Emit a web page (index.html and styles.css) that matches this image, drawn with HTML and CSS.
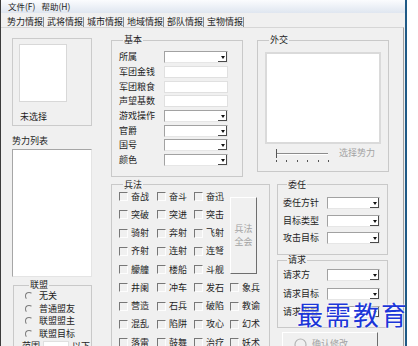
FILE: index.html
```html
<!DOCTYPE html>
<html lang="zh-CN">
<head>
    <meta charset="UTF-8">
    <title>势力情报</title>
    <link rel="stylesheet" href="styles.css">
</head>
<body>
    <div class="window">
        <div class="menubar">
            <span class="menu">文件(F)</span>
            <span class="menu">帮助(H)</span>
        </div>
        <div class="tabs">
            <span class="tab">势力情报</span>
            <span class="tab">武将情报</span>
            <span class="tab">城市情报</span>
            <span class="tab">地域情报</span>
            <span class="tab">部队情报</span>
            <span class="tab">宝物情报</span>
        </div>

        <div class="panel">
            <div class="side">
                <div class="portrait">
                    <div class="photo"></div>
                    <div class="name">未选择</div>
                </div>
                <div class="list-title">势力列表</div>
                <div class="list"></div>
                <fieldset class="group alliance">
                    <legend>联盟</legend>
                    <div class="radios">
                        <label class="radio"><span class="dot"></span>无关</label>
                        <label class="radio"><span class="dot"></span>普通盟友</label>
                        <label class="radio"><span class="dot"></span>联盟盟主</label>
                        <label class="radio"><span class="dot"></span>联盟目标</label>
                        <div class="range">范围<span class="field small"></span>以下</div>
                    </div>
                </fieldset>
            </div>

            <div class="main">
                <div class="row">
                    <fieldset class="group basic">
                        <legend>基本</legend>
                        <div class="form">
                            <span>所属</span><span class="combo"></span>
                            <span>军团金钱</span><span class="field"></span>
                            <span>军团粮食</span><span class="field"></span>
                            <span>声望基数</span><span class="field"></span>
                            <span>游戏操作</span><span class="combo"></span>
                            <span>官爵</span><span class="combo"></span>
                            <span>国号</span><span class="combo"></span>
                            <span>颜色</span><span class="combo"></span>
                        </div>
                    </fieldset>
                    <fieldset class="group diplomacy">
                        <legend>外交</legend>
                        <div class="relations"></div>
                        <div class="slider-row">
                            <svg class="slider" width="58" height="16" viewBox="0 0 58 16">
                                <line x1="3" y1="5.5" x2="55" y2="5.5" stroke="#8c8c8c"/>
                                <line x1="3" y1="6.5" x2="55" y2="6.5" stroke="#ffffff"/>
                                <line x1="3.5" y1="1" x2="3.5" y2="10" stroke="#555"/>
                                <rect x="3" y="12" width="1" height="2" fill="#555"/>
                                <rect x="13" y="12" width="1" height="2" fill="#555"/>
                                <rect x="24" y="12" width="1" height="2" fill="#555"/>
                                <rect x="34" y="12" width="1" height="2" fill="#555"/>
                                <rect x="45" y="12" width="1" height="2" fill="#555"/>
                                <rect x="55" y="12" width="1" height="2" fill="#555"/>
                            </svg>
                            <span class="muted">选择势力</span>
                        </div>
                    </fieldset>
                </div>

                <div class="row lower">
                    <fieldset class="group tactics">
                        <legend>兵法</legend>
                        <div class="checks">
                            <button class="all-btn">兵法<br>全会</button>
                            <label class="check"><span class="box"></span>奋战</label>
                            <label class="check"><span class="box"></span>奋斗</label>
                            <label class="check"><span class="box"></span>奋迅</label>
                            <label class="check"><span class="box"></span>突破</label>
                            <label class="check"><span class="box"></span>突进</label>
                            <label class="check"><span class="box"></span>突击</label>
                            <label class="check"><span class="box"></span>骑射</label>
                            <label class="check"><span class="box"></span>奔射</label>
                            <label class="check"><span class="box"></span>飞射</label>
                            <label class="check"><span class="box"></span>齐射</label>
                            <label class="check"><span class="box"></span>连射</label>
                            <label class="check"><span class="box"></span>连弩</label>
                            <label class="check"><span class="box"></span>艨艟</label>
                            <label class="check"><span class="box"></span>楼船</label>
                            <label class="check"><span class="box"></span>斗舰</label>
                            <label class="check"><span class="box"></span>井阑</label>
                            <label class="check"><span class="box"></span>冲车</label>
                            <label class="check"><span class="box"></span>发石</label>
                            <label class="check"><span class="box"></span>象兵</label>
                            <label class="check"><span class="box"></span>营造</label>
                            <label class="check"><span class="box"></span>石兵</label>
                            <label class="check"><span class="box"></span>破陷</label>
                            <label class="check"><span class="box"></span>教谕</label>
                            <label class="check"><span class="box"></span>混乱</label>
                            <label class="check"><span class="box"></span>陷阱</label>
                            <label class="check"><span class="box"></span>攻心</label>
                            <label class="check"><span class="box"></span>幻术</label>
                            <label class="check"><span class="box"></span>落雷</label>
                            <label class="check"><span class="box"></span>鼓舞</label>
                            <label class="check"><span class="box"></span>治疗</label>
                            <label class="check"><span class="box"></span>妖术</label>
                        </div>
                    </fieldset>

                    <div class="stack">
                        <fieldset class="group delegate">
                            <legend>委任</legend>
                            <div class="form small-form">
                                <span>委任方针</span><span class="combo"></span>
                                <span>目标类型</span><span class="combo"></span>
                                <span>攻击目标</span><span class="combo"></span>
                            </div>
                        </fieldset>
                        <fieldset class="group request">
                            <legend>请求</legend>
                            <div class="form small-form">
                                <span>请求方</span><span class="combo"></span>
                                <span>请求目标</span><span class="combo"></span>
                                <span>请求内容</span><span class="combo"></span>
                            </div>
                        </fieldset>
                        <button class="confirm">
                            <svg width="13" height="13" viewBox="0 0 13 13">
                                <circle cx="6.5" cy="6.5" r="5.5" fill="none" stroke="#b4b4b4" stroke-width="1.2"/>
                            </svg>
                            确认修改
                        </button>
                    </div>
                </div>
            </div>
        </div>

        <div class="watermark">最需教育</div>
    </div>
</body>
</html>
```

FILE: styles.css
```css
body {
    margin: 0;
    background: #fff;
    font-family: "Noto Sans CJK SC", "Liberation Sans", sans-serif;
    font-size: 9px;
    line-height: 12px;
    color: #1e1e1e;
}

.window {
    position: relative;
    width: 404px;
    height: 346px;
    overflow: hidden;
    background: #f0f0f0;
    border-left: 1px solid #3c3c3c;
    border-right: 2px solid #1f5a86;
}

/* menu + tab strip */
.menubar {
    display: flex;
    gap: 6px;
    height: 13px;
    padding-left: 7px;
    background: linear-gradient(#fbfcfe, #dfe6f0);
    font-size: 8.5px;
    line-height: 13px;
}

.tabs {
    display: flex;
    align-items: flex-end;
    height: 14px;
    padding-left: 3px;
}

.tab {
    padding-left: 3px;
    border-right: 1px solid #8a8a8a;
    line-height: 10px;
    height: 10px;
}

.panel {
    display: flex;
    width: 391px;
    height: 318px;
    padding-left: 11px;
    border-top: 1px solid #d6d6d6;
    border-right: 1px solid #a0a0a0;
}

/* left column */
.side {
    display: flex;
    flex-direction: column;
    flex-shrink: 0;
    width: 80px;
}

.side > * {
    flex-shrink: 0;
}

.portrait {
    display: flex;
    flex-direction: column;
    justify-content: space-between;
    box-sizing: border-box;
    height: 88px;
    margin-top: 10px;
    padding: 5px 6px 2px;
    border: 1px solid #cbcbcb;
}

.photo {
    width: 48px;
    height: 58px;
    box-sizing: border-box;
    background: #fff;
    border: 1px solid #d8d8d8;
}

.name {
    padding-left: 1px;
}

.list-title {
    margin-top: 9px;
}

.list {
    box-sizing: border-box;
    height: 128px;
    margin-top: 2px;
    background: #fff;
    border: 1px solid;
    border-color: #a6a6a6 #e4e4e4 #e4e4e4 #a6a6a6;
}

/* group boxes */
.group {
    margin: 0;
    padding: 0 6px 8px 7px;
    min-width: 0;
    box-sizing: border-box;
    border: 1px solid #c9c9c9;
}

.group legend {
    margin-left: 4px;
    padding: 0 1px;
    line-height: 12px;
}

.alliance {
    width: 79px;
    height: 80px;
    margin: 2px 0 0 1px;
    padding: 0 0 0 11px;
}

.radios {
    display: grid;
    grid-auto-rows: 12.5px;
    align-items: center;
    margin-top: -1px;
}

.radio {
    display: flex;
    align-items: center;
    gap: 6px;
}

.dot {
    width: 6px;
    height: 6px;
    border-radius: 50%;
    border: 1px solid;
    border-color: #7c7c7c #f0f0f0 #f0f0f0 #7c7c7c;
}

.range {
    display: flex;
    align-items: center;
    gap: 3px;
    margin-left: -3px;
    white-space: nowrap;
}

/* main area */
.main {
    flex-shrink: 0;
    margin-left: 19px;
    width: 278px;
}

.row {
    display: flex;
    align-items: flex-start;
    margin-top: 6px;
}

.row.lower {
    margin-top: 2px;
}

.basic {
    width: 132px;
}

.form {
    display: grid;
    grid-template-columns: 45px 64px;
    grid-auto-rows: 14.7px;
    align-items: center;
    padding-top: 4px;
    white-space: nowrap;
}

.field {
    height: 12px;
    box-sizing: border-box;
    background: #fff;
    border: 1px solid #e0e0e0;
}

.field.small {
    flex-shrink: 0;
    width: 26px;
    height: 11px;
}

.combo {
    position: relative;
    height: 12px;
    box-sizing: border-box;
    background: #fff;
    border: 1px solid;
    border-color: #a2a2a2 #e6e6e6 #e6e6e6 #a2a2a2;
}

.combo::before {
    content: "";
    position: absolute;
    top: 0;
    right: 0;
    width: 9px;
    height: 100%;
    box-sizing: border-box;
    border-right: 1px solid #4a4a4a;
    border-bottom: 1px solid #4a4a4a;
}

.combo::after {
    content: "";
    position: absolute;
    right: 2px;
    top: 4px;
    border-left: 2.5px solid transparent;
    border-right: 2.5px solid transparent;
    border-top: 3px solid #111;
}

.diplomacy {
    width: 132px;
    height: 138px;
    margin-left: 14px;
}

.relations {
    width: 116px;
    height: 92px;
    margin-top: 6px;
    box-sizing: border-box;
    background: #fff;
    border: 2px solid #dadada;
}

.slider-row {
    display: flex;
    align-items: flex-start;
    gap: 8px;
    margin-top: 4px;
    padding-left: 8px;
}

.slider-row .muted {
    margin-top: -1px;
}

.muted {
    color: #a3a3a3;
}

/* tactics */
.tactics {
    flex-shrink: 0;
    width: 159px;
    height: 180px;
}

.checks {
    display: grid;
    grid-template-columns: 38px 37px 36px 30px;
    grid-auto-rows: 12px;
    row-gap: 6.25px;
    align-items: center;
}

.check {
    display: flex;
    align-items: center;
    gap: 3px;
    white-space: nowrap;
}

.box {
    width: 9px;
    height: 9px;
    box-sizing: border-box;
    border: 1px solid;
    border-color: #777 #fdfdfd #fdfdfd #777;
}

.all-btn {
    grid-column: 4;
    grid-row: 1 / span 5;
    align-self: start;
    width: 27px;
    height: 77px;
    margin-top: 6px;
    padding: 0;
    background: #f0f0f0;
    border: 1px solid;
    border-color: #fff #6e6e6e #6e6e6e #fff;
    color: #a3a3a3;
    font: inherit;
    line-height: 13px;
}

/* right stack */
.stack {
    flex-shrink: 0;
    width: 111px;
    margin-left: 7px;
}

.delegate {
    padding: 0 6px 10px 5px;
}

.small-form {
    grid-template-columns: 44px 53px;
    grid-auto-rows: 12px;
    row-gap: 5.5px;
    padding-top: 6.5px;
}

.request {
    margin-top: -1px;
    padding: 0 6px 9px 5px;
}

.request .small-form {
    row-gap: 6.5px;
    padding-top: 3px;
}

.confirm {
    display: flex;
    align-items: center;
    gap: 5px;
    width: 96px;
    height: 24px;
    margin: 4px 0 0 5px;
    padding: 0 0 0 11px;
    background: #f0f0f0;
    border: 1px solid;
    border-color: #fff #6e6e6e #6e6e6e #fff;
    color: #a3a3a3;
    font: inherit;
    white-space: nowrap;
}

.watermark {
    position: absolute;
    left: 296px;
    top: 298px;
    font-size: 26px;
    line-height: 32px;
    letter-spacing: 2px;
    white-space: nowrap;
    color: #1c36d8;
    text-shadow: 0 0 2px #fff, 0 0 2px #fff;
}
```
